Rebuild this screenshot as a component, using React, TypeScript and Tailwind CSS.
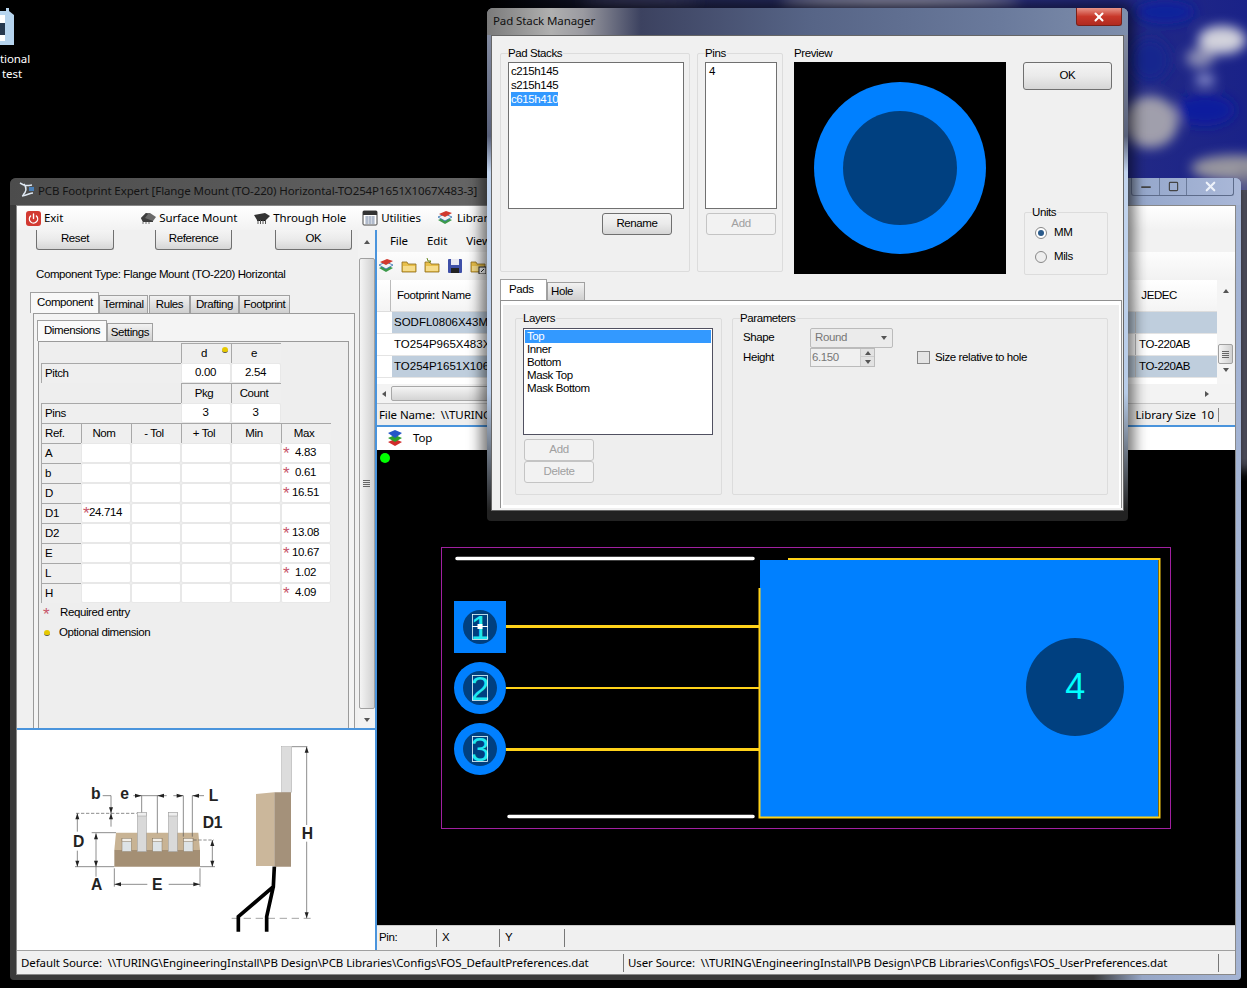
import { Minus, Power, Square, X } from "lucide-react";
import type { ReactNode } from "react";

const sans = "font-['Liberation_Sans',Arial,sans-serif] text-[11.5px] tracking-[-0.4px]";
const segoe = "font-['Noto_Sans',sans-serif] text-[11.5px] tracking-[-0.1px]";

const dimensions = [
  ["A", "", "4.83"],
  ["b", "", "0.61"],
  ["D", "", "16.51"],
  ["D1", "24.714", ""],
  ["D2", "", "13.08"],
  ["E", "", "10.67"],
  ["L", "", "1.02"],
  ["H", "", "4.09"],
];

const Arrow = ({ dir }: { dir: "up" | "down" | "left" | "right" }) => {
  const points = {
    up: "1,6 4,2 7,6",
    down: "1,2 4,6 7,2",
    left: "6,1 2,4 6,7",
    right: "2,1 6,4 2,7",
  }[dir];
  return (
    <svg width="8" height="8" viewBox="0 0 8 8">
      <polygon points={points} fill="#555" />
    </svg>
  );
};

const Grip = () => (
  <div className="flex flex-col gap-[1px]">
    <div className="w-[7px] h-[1px] bg-[#666]" />
    <div className="w-[7px] h-[1px] bg-[#666]" />
    <div className="w-[7px] h-[1px] bg-[#666]" />
    <div className="w-[7px] h-[1px] bg-[#666]" />
  </div>
);

const Folder = ({ spark, link }: { spark?: boolean; link?: boolean }) => (
  <svg width="16" height="16" viewBox="0 0 16 16">
    <path d="M1 4h5l1 2h8v8H1z" fill="#e8bf4a" stroke="#8a6a1c" strokeWidth="0.8" />
    <path d="M2 8h12v5H2z" fill="#f6dc8a" />
    {spark && <path d="M3 0l1 3 3 0-2 2" fill="none" stroke="#6a8a20" strokeWidth="1" />}
    {link && <rect x="9" y="9" width="7" height="7" fill="#fff" stroke="#222" />}
    {link && <path d="M11 14l3-3" stroke="#222" />}
  </svg>
);

const Books = () => (
  <svg width="16" height="16" viewBox="0 0 16 16">
    <path d="M1 10l7-3 7 3-7 4z" fill="#3c9a4a" />
    <path d="M1 7l7-3 7 3-7 4z" fill="#f2f2f2" stroke="#2f6fb0" strokeWidth="0.8" />
    <path d="M2 4l7-3 6 2-7 4z" fill="#d0392e" />
  </svg>
);

const SmtChip = () => (
  <svg width="16" height="14" viewBox="0 0 16 14">
    <path d="M1 7l5-5 4 0 6 4-3 4-10 1z" fill="#6a6a6a" />
    <path d="M1 7l5-5 2 1-3 4 8 3v1L3 11z" fill="#3e3e3e" />
    <path d="M3 11v2M6 11v2M9 11v2" stroke="#888" strokeWidth="1.2" />
  </svg>
);

const DipChip = () => (
  <svg width="16" height="14" viewBox="0 0 16 14">
    <path d="M0 4l11-2 5 3-4 4-9 0z" fill="#333" />
    <path d="M3 9h9v1H3z" fill="#111" />
    <path d="M4 9v4M6.500 9v4M9 9v4M11.500 9v4" stroke="#555" strokeWidth="1" />
  </svg>
);

const Calendar = () => (
  <svg width="16" height="16" viewBox="0 0 16 16">
    <rect x="1" y="1" width="14" height="14" rx="1" fill="#fff" stroke="#444" />
    <rect x="1" y="1" width="14" height="4" fill="#333" />
    <path d="M3 7h10M3 9h10M3 11h10M3 13h10M5 6v8M8 6v8M11 6v8" stroke="#7a8aa8" strokeWidth="0.7" />
  </svg>
);

const Dot = ({ className }: { className: string }) => (
  <span className={`block w-[6px] h-[6px] rounded-full bg-[#e6c800] border-b border-[#555] ${className}`} />
);

const Label = ({ children, center, span }: { children?: ReactNode; center?: boolean; span?: boolean }) => (
  <div
    className={`flex items-center h-full border-t border-l border-[#a8a8a8] bg-[#efefef] text-black ${
      center ? "justify-center pr-[5px]" : "pl-[3px]"
    } ${span ? "col-span-3" : ""}`}
  >
    {children}
  </div>
);

const Value = ({ children, required }: { children?: ReactNode; required?: boolean }) => (
  <div className="relative flex items-center justify-center h-full bg-white border border-[#e8e8e8] rounded-[2px] pr-[1px] text-black">
    {required && <span className="absolute left-[1px] top-[1px] text-[17px] leading-[17px] text-[#c8566c]">*</span>}
    {children}
  </div>
);

const DimensionGrid = () => (
  <div className="grid grid-cols-[40px_50px_50px_50px_50px_50px] auto-rows-[20px]">
    <div className="col-span-3" />
    <div className="relative h-full">
      <Label center>d</Label>
      <Dot className="absolute right-[3px] top-[4px]" />
    </div>
    <Label center>e</Label>
    <div />
    <Label span>Pitch</Label>
    <Value>0.00</Value>
    <Value>2.54</Value>
    <div />
    <div className="col-span-3" />
    <Label center>Pkg</Label>
    <Label center>Count</Label>
    <div />
    <Label span>Pins</Label>
    <Value>3</Value>
    <Value>3</Value>
    <div />
    <Label>Ref.</Label>
    <Label center>Nom</Label>
    <Label center>- Tol</Label>
    <Label center>+ Tol</Label>
    <Label center>Min</Label>
    <Label center>Max</Label>
    {dimensions.map(([name, nom, max]) => (
      <div key={name} className="contents">
        <Label>{name}</Label>
        <Value required={nom !== ""}>{nom}</Value>
        <Value />
        <Value />
        <Value />
        <Value required={max !== ""}>{max}</Value>
      </div>
    ))}
  </div>
);

const GroupBox = ({ title, className, children }: { title: string; className: string; children?: ReactNode }) => (
  <div className={`relative border border-[#dcdcdc] rounded-[2px] ${className}`}>
    <span className="absolute top-[-7px] left-[7px] bg-[#f0f0f0] pr-[1px] leading-[13px] text-black">
      {title}
    </span>
    {children}
  </div>
);

const WinButton = ({ children, className, disabled }: { children: ReactNode; className: string; disabled?: boolean }) => (
  <div
    className={`flex items-center justify-center rounded-[3px] border ${
      disabled
        ? "border-[#c4c4c4] bg-[#f2f2f2] text-[#a0a0a0]"
        : "border-[#707070] bg-[linear-gradient(#f4f4f4,#ebebeb_48%,#d6d6d6)] text-black"
    } ${className}`}
  >
    {children}
  </div>
);

const Wallpaper = () => (
  <svg className="absolute right-0 top-0" width="760" height="520" viewBox="487 0 760 520">
    <defs>
      <filter id="cloud" x="-40%" y="-40%" width="180%" height="180%">
        <feGaussianBlur stdDeviation="6" />
      </filter>
      <linearGradient id="fade" x1="0" x2="1" y1="0" y2="0">
        <stop offset="0" stopColor="#000" />
        <stop offset="0.25" stopColor="#232850" />
        <stop offset="0.7" stopColor="#2a3084" />
        <stop offset="1" stopColor="#1a2288" />
      </linearGradient>
    </defs>
    <rect x="487" y="0" width="760" height="190" fill="url(#fade)" />
    <g filter="url(#cloud)">
      <ellipse cx="1222" cy="40" rx="24" ry="14" fill="#d2d2dc" />
      <ellipse cx="1200" cy="58" rx="14" ry="10" fill="#8a8cb4" />
      <ellipse cx="1165" cy="12" rx="30" ry="12" fill="#10209c" />
      <ellipse cx="1150" cy="122" rx="28" ry="26" fill="#a09fac" />
      <ellipse cx="1205" cy="110" rx="30" ry="16" fill="#0e1c9e" />
      <ellipse cx="1235" cy="168" rx="44" ry="13" fill="#98969f" />
      <ellipse cx="1150" cy="60" rx="20" ry="22" fill="#18258e" />
      <ellipse cx="1205" cy="80" rx="10" ry="5" fill="#a0a4d8" />
      <ellipse cx="900" cy="2" rx="120" ry="6" fill="#a8a8b8" />
      <ellipse cx="640" cy="2" rx="60" ry="4" fill="#46466e" />
      <rect x="1240" y="170" width="10" height="300" fill="#74748a" />
    </g>
  </svg>
);

const FrontAndSideDrawing = () => (
  <svg width="350" height="220" viewBox="0 0 1050 660" className="ml-[3px]" fontFamily="Liberation Sans, Arial, sans-serif">
    <path d="M288 308H535L540 360H283Z" fill="#c8b394" />
    <path d="M283 360H540V410H283Z" fill="#a48f74" />
    {[306, 398, 491].map((x) => (
      <g key={x}>
        <rect x={x} y="325" width="28" height="40" fill="#dde3e6" stroke="#8a7a62" strokeWidth="1.5" />
        <rect x={x} y="325" width="28" height="9" fill="#f3efe8" stroke="#8a7a62" strokeWidth="1.5" />
      </g>
    ))}
    {[352, 445].map((x) => (
      <g key={x}>
        <rect x={x} y="247" width="27" height="118" fill="#d9d9d9" stroke="#9a9a9a" strokeWidth="1.5" />
        <rect x={x} y="247" width="27" height="11" fill="#efefef" stroke="#9a9a9a" strokeWidth="1.5" />
      </g>
    ))}
    <g stroke="#555" strokeWidth="2" fill="none">
      <path d="M248 197H273V290M172 250V305M172 362V410M228 310V440M215 308H288M165 410H283M365 197V247M412 197V310M490 197V320M517 197V320M340 197H440" />
      <path d="M460 197H490M517 197H552M577 330V410M540 410H585M283 415V470M540 415V470M283 463H382M446 463H540" />
      <path d="M520 330H582M168 250H350" strokeDasharray="10 5" />
      <path d="M815 50H862M860 50V285M860 335V565" />
      <path d="M635 565H872" strokeDasharray="22 14" stroke="#777" />
    </g>
    <g fill="#222">
      <path d="M172 250l-6 18h12zM172 410l-6-18h12zM228 310l-6 18h12zM228 410l-6-18h12zM860 50l-6 18h12zM860 565l-6-18h12zM577 330l-6 18h12zM577 410l-6-18h12z" />
      <path d="M283 463l20-6v12zM540 463l-20-6v12zM365 197l-20-6v12zM412 197l20-6v12zM490 197l-20-6v12zM517 197l20-6v12zM273 250l-6-18h12zM273 250l-6 18h12z" />
    </g>
    <g fontSize="47" fontWeight="700" fill="#222">
      <text x="213" y="208">b</text>
      <text x="301" y="208">e</text>
      <text x="566" y="213">L</text>
      <text x="548" y="295">D1</text>
      <text x="159" y="350">D</text>
      <text x="213" y="481">A</text>
      <text x="396" y="481">E</text>
      <text x="845" y="327">H</text>
    </g>
    <rect x="785" y="50" width="30" height="137" fill="#dcdcdc" stroke="#a8a8a8" strokeWidth="1.5" />
    <path d="M708 192L763 187V408L708 408Z" fill="#cbb79b" />
    <path d="M763 187H813V410H763Z" fill="#a4917a" />
    <path d="M763 410L760 470L655 560V605M760 470L740 560V605" fill="none" stroke="#000" strokeWidth="11" />
  </svg>
);

const PcbCanvas = () => (
  <svg width="858" height="475" viewBox="377 450 858 475" className="block bg-black shrink-0" fontFamily="Liberation Sans, Arial, sans-serif">
    <circle cx="385" cy="458" r="5" fill="#00ff00" />
    <rect x="441.5" y="547.5" width="729" height="281" fill="none" stroke="#a020a0" />
    <path d="M457 558.5H753M509 816.5H753" stroke="#fff" strokeWidth="3.5" strokeLinecap="round" />
    <rect x="760" y="560" width="398" height="257" fill="#0080ff" />
    <path d="M788 559H1159.5V817.5H759.5V588" fill="none" stroke="#ffd21a" strokeWidth="2" />
    <circle cx="1075" cy="687" r="49" fill="#004080" />
    <text x="1075" y="699" fontSize="36" fill="#00ffff" textAnchor="middle">4</text>
    <path d="M506 626.5H759M506 749.5H759" stroke="#ffd21a" strokeWidth="3" />
    <path d="M506 688H759" stroke="#ffd21a" strokeWidth="2" />
    <rect x="454" y="601" width="52" height="52" fill="#0080ff" />
    <circle cx="480" cy="688" r="26" fill="#0080ff" />
    <circle cx="480" cy="749" r="26" fill="#0080ff" />
    {[
      { y: 627, label: "1" },
      { y: 688, label: "2" },
      { y: 749, label: "3" },
    ].map((p) => (
      <g key={p.label}>
        <circle cx="480" cy={p.y} r="17" fill="#004080" />
        <text x="480" y={p.y + 12} fontSize="34" fill="#1ee8f0" textAnchor="middle">
          {p.label}
        </text>
        <rect x="472.5" y={p.y - 12.5} width="15" height="25" fill="none" stroke="#e8ffff" strokeWidth="0.8" />
      </g>
    ))}
    <path d="M472 626.5H488" stroke="#fff" />
    <rect x="477.5" y="624" width="5" height="5" fill="#fff" />
  </svg>
);

const MainWindow = () => (
  <div className="absolute left-[10px] top-[178px] w-[1231px] h-[802px] rounded-t-[6px] rounded-b-[4px] bg-[linear-gradient(90deg,#3a3a3a,#3a3a3a_88%,#96a6c6_92%,#a4b4d4)] flex flex-col">
    <div className="h-[27px] shrink-0 flex items-start relative rounded-t-[6px] bg-[linear-gradient(90deg,#4c4c4c,#666_40%,#5a5a5a_88%,#96a8cc_92%,#aab8d8)]">
      <svg width="18" height="18" viewBox="0 0 18 18" className="ml-[8px] mt-[3px]">
        <path d="M2 2c5 3 6 3 12 2M4 15c6-1 8-3 11-3M6 3c3 4 2 8-1 11" stroke="#dfe8f2" fill="none" strokeWidth="1.5" />
        <rect x="11" y="6" width="5" height="4" fill="#4a80b8" />
      </svg>
      <span className={`${segoe} ml-[2px] mt-[4px] leading-[17px] text-[#141414] whitespace-nowrap`}>
        PCB Footprint Expert [Flange Mount (TO-220) Horizontal-TO254P1651X1067X483-3]
      </span>
      <div className="ml-auto mr-[7px] flex h-[18px] border border-t-0 border-[#5d6b8a] rounded-b-[3px] text-[#333]">
        <div className="w-[28px] flex items-end justify-center border-r border-[#6a7a9a] pb-[1px]">
          <Minus size={14} strokeWidth={3} color="#444" />
        </div>
        <div className="w-[27px] flex items-center justify-center border-r border-[#6a7a9a]">
          <Square size={11} strokeWidth={2.5} color="#444" />
        </div>
        <div className="w-[46px] flex items-center justify-center">
          <X size={15} strokeWidth={3.5} color="#eef2fa" />
        </div>
      </div>
    </div>

    <div className="ml-[6px] mr-[5px] h-[770px] shrink-0 flex flex-col bg-[#f0f0f0] border border-[#888]">
      <div className={`${segoe} h-[24px] shrink-0 flex items-center bg-[linear-gradient(#fff,#f2f2f2)] text-black whitespace-nowrap`}>
        <div className="ml-[9px] w-[15px] h-[15px] rounded-[3px] bg-[#d23a32] flex items-center justify-center">
          <Power size={11} strokeWidth={3} color="#fff" />
        </div>
        <span className="ml-[3px]">Exit</span>
        <div className="ml-[77px]"><SmtChip /></div>
        <span className="ml-[3px]">Surface Mount</span>
        <div className="ml-[17px]"><DipChip /></div>
        <span className="ml-[3px]">Through Hole</span>
        <div className="ml-[16px]"><Calendar /></div>
        <span className="ml-[3px]">Utilities</span>
        <div className="ml-[16px]"><Books /></div>
        <span className="ml-[4px]">Library</span>
      </div>

      <div className="flex h-[720px] shrink-0">
        <div className={`${sans} w-[360px] shrink-0 flex flex-col border-r-2 border-[#4a94dc]`}>
          <div className="flex h-[498px] shrink-0 border-b-2 border-[#4a94dc] box-content">
            <div className="w-[341px] shrink-0 flex flex-col">
              <div className="flex ml-[19px] h-[20px] shrink-0">
                <WinButton className="w-[78px] rounded-t-none border-t-0 pb-[2px]">Reset</WinButton>
                <WinButton className="ml-[41px] w-[77px] rounded-t-none border-t-0 pb-[2px]">Reference</WinButton>
                <WinButton className="ml-[43px] w-[77px] rounded-t-none border-t-0 pb-[2px]">OK</WinButton>
              </div>
              <div className="ml-[19px] mt-[17px] h-[14px] leading-[14px] text-black whitespace-nowrap">
                Component Type: Flange Mount (TO-220) Horizontal
              </div>
              <div className="ml-[13px] mt-[12px] h-[20px] flex items-end text-black">
                <div className="w-[69px] h-[21px] border border-b-0 border-[#a0a0a0] bg-[#f8f8f8] pl-[6px] leading-[18px]">Component</div>
                <div className="w-[49px] h-[18px] border border-b-0 border-[#a0a0a0] bg-[linear-gradient(#f2f2f2,#cfcfcf)] text-center">Terminal</div>
                <div className="ml-[1px] w-[41px] h-[18px] border border-b-0 border-[#a0a0a0] bg-[linear-gradient(#f2f2f2,#cfcfcf)] text-center">Rules</div>
                <div className="w-[49px] h-[18px] border border-b-0 border-[#a0a0a0] bg-[linear-gradient(#f2f2f2,#cfcfcf)] text-center">Drafting</div>
                <div className="w-[51px] h-[18px] border border-b-0 border-[#a0a0a0] bg-[linear-gradient(#f2f2f2,#cfcfcf)] text-center">Footprint</div>
              </div>
              <div className="ml-[16px] w-[322px] flex-1 min-h-0 border border-b-0 border-[#9a9a9a] bg-[#f4f4f4] pl-[3px] pt-[6px]">
                <div className="h-[21px] flex items-end text-black">
                  <div className="w-[70px] h-[21px] border border-b-0 border-[#a0a0a0] bg-[#fafafa] text-center leading-[18px]">Dimensions</div>
                  <div className="w-[46px] h-[18px] border border-b-0 border-[#a0a0a0] bg-[linear-gradient(#f2f2f2,#cfcfcf)] text-center">Settings</div>
                </div>
                <div className="ml-[1px] w-[311px] h-[387px] border border-b-0 border-[#9a9a9a] bg-[#eeeeee] pl-[2px] pt-[1px]">
                  <DimensionGrid />
                  <div className="flex flex-col text-black">
                    <div className="h-[20px] flex items-center">
                      <span className="ml-[2px] w-[17px] h-[14px] text-[#c8566c] text-[17px] leading-[17px]">*</span>
                      <span>Required entry</span>
                    </div>
                    <div className="h-[20px] flex items-center">
                      <Dot className="ml-[3px] mr-[9px]" />
                      <span>Optional dimension</span>
                    </div>
                  </div>
                </div>
              </div>
            </div>
            <div className="w-[17px] shrink-0 flex flex-col items-center bg-[#f2f2f2]">
              <div className="h-[21px] flex items-center pt-[2px]"><Arrow dir="up" /></div>
              <div className="mt-[7px] w-[16px] h-[451px] rounded-[2px] border border-[#a0a0a0] bg-[linear-gradient(90deg,#f4f4f4,#d0d0d0)] flex items-center justify-center">
                <Grip />
              </div>
              <div className="mt-[7px]"><Arrow dir="down" /></div>
            </div>
          </div>
          <div className="bg-white flex-1 min-h-0 overflow-hidden">
            <FrontAndSideDrawing />
          </div>
        </div>

        <div className={`${sans} flex-1 min-w-0 flex flex-col text-black`}>
          <div className={`${segoe} h-[22px] shrink-0 flex items-center pl-[13px] gap-[19px] bg-[#f2f2f2]`}>
            <span>File</span>
            <span>Edit</span>
            <span>View</span>
          </div>
          <div className="h-[28px] shrink-0 flex items-center gap-[7px] pl-[1px] bg-[linear-gradient(#fdfdfd,#f2f2f2)]">
            <Books />
            <Folder />
            <Folder spark />
            <svg width="16" height="16" viewBox="0 0 16 16">
              <rect x="1" y="1" width="14" height="14" rx="1" fill="#3e4fa8" />
              <rect x="4" y="1" width="8" height="6" fill="#e8e8f2" />
              <rect x="4" y="10" width="8" height="5" fill="#222" />
            </svg>
            <Folder link />
          </div>
          <div className="h-[104px] shrink-0 flex bg-[#f0f0f0]">
            <div className="flex-1 min-w-0 flex flex-col bg-white">
              <div className="h-[32px] shrink-0 flex items-center bg-[linear-gradient(#fff,#f4f4f4)] border-b border-[#ddd]">
                <div className="w-[14px] h-full border-r border-[#bbb]" />
                <span className="ml-[6px]">Footprint Name</span>
                <span className="ml-auto mr-[40px]">JEDEC</span>
              </div>
              {[
                ["SODFL0806X43M_", "", "bg-[#bfcedd]"],
                ["TO254P965X483X", "TO-220AB", "bg-white"],
                ["TO254P1651X106", "TO-220AB", "bg-[#bfcedd]"],
              ].map(([name, jedec, bg]) => (
                <div key={name} className="h-[22px] shrink-0 flex items-center border-b border-[#e4e4e4]">
                  <div className="w-[15px] h-full bg-white" />
                  <div className={`flex-1 h-full flex items-center pl-[2px] ${bg}`}>
                    <span className="tracking-normal">{name}</span>
                    <span className="ml-auto w-[82px] h-full flex items-center pl-[3px] border-l border-[#bbb]">{jedec}</span>
                  </div>
                </div>
              ))}
            </div>
            <div className="w-[17px] mr-[1px] shrink-0 flex flex-col items-center bg-[#f4f4f4]">
              <div className="h-[17px] mt-[2px] flex items-center"><Arrow dir="up" /></div>
              <div className="mt-[45px] w-[15px] h-[20px] rounded-[2px] border border-[#a0a0a0] bg-[linear-gradient(90deg,#f4f4f4,#d0d0d0)] flex items-center justify-center">
                <Grip />
              </div>
              <div className="mt-[2px]"><Arrow dir="down" /></div>
            </div>
          </div>
          <div className="h-[19px] shrink-0 flex items-center bg-[#f3f3f3]">
            <div className="ml-[3px]"><Arrow dir="left" /></div>
            <div className="ml-[3px] w-[640px] h-[15px] rounded-[2px] border border-[#a8a8a8] bg-[linear-gradient(#f4f4f4,#d4d4d4)]" />
            <div className="ml-auto mr-[24px]"><Arrow dir="right" /></div>
          </div>
          <div className={`${segoe} h-[22px] shrink-0 flex items-center pl-[2px] bg-[#eeeeee] border-t border-[#c8c8c8] whitespace-nowrap`}>
            <span>File Name:&nbsp;&nbsp;\\TURING</span>
            <span className="ml-auto">Library Size</span>
            <span className="ml-[5px] w-[16px] mr-[1px]">10</span>
            <span className="w-[1px] h-[14px] bg-[#888] mr-[16px]" />
          </div>
          <div className="h-[2px] shrink-0 bg-[#4a94dc]" />
          <div className="h-[23px] shrink-0 flex items-center bg-white pb-[2px]">
            <svg width="18" height="18" viewBox="0 0 18 18" className="ml-[9px]">
              <path d="M9 10l7 3-7 4-7-4z" fill="#d02c2c" />
              <path d="M9 6l7 3-7 4-7-4z" fill="#2ca02c" />
              <path d="M9 1l7 3-7 5-7-5z" fill="#2456c8" />
            </svg>
            <span className={`${segoe} ml-[9px]`}>Top</span>
          </div>
          <PcbCanvas />
          <div className="flex-1 min-h-0 flex items-center bg-[#f0f0f0] border-t border-[#ccc]">
            <span className="w-[60px] pl-[2px] h-[18px] border-r border-[#777]">Pin:</span>
            <span className="w-[63px] pl-[5px] h-[18px] border-r border-[#777]">X</span>
            <span className="w-[65px] pl-[5px] h-[18px] border-r border-[#777]">Y</span>
          </div>
        </div>
      </div>

      <div className={`${segoe} flex-1 min-h-0 flex items-center bg-[#f0f0f0] border-t border-[#a0a0a0] text-black whitespace-nowrap`}>
        <span className="w-[607px] pl-[4px] h-[18px] leading-[18px] border-r border-[#777] overflow-hidden">
          Default Source:&nbsp;&nbsp;\\TURING\EngineeringInstall\PB Design\PCB Libraries\Configs\FOS_DefaultPreferences.dat
        </span>
        <span className="w-[595px] pl-[4px] h-[18px] leading-[18px] border-r border-[#777] overflow-hidden">
          User Source:&nbsp;&nbsp;\\TURING\EngineeringInstall\PB Design\PCB Libraries\Configs\FOS_UserPreferences.dat
        </span>
      </div>
    </div>
  </div>
);

const PadStackDialog = () => (
  <div className="absolute left-[487px] top-[8px] w-[641px] h-[513px] rounded-t-[6px] rounded-b-[4px] flex flex-col bg-[linear-gradient(#8f97ab,#59617a_25%,#c3d5ee_32%,#b8cce8_75%,#222_98%)] shadow-[0_0_14px_6px_rgba(0,0,0,0.55)]">
    <div className="relative h-[27px] shrink-0 flex items-start rounded-t-[6px] bg-[linear-gradient(90deg,#7a7a7a,#b0b0b0_10%,#9a9aa0_15%,#3c4260_24%,#566486_50%,#6a7a9c_80%,#7e8eac)]">
      <span className={`${segoe} ml-[6px] mt-[4px] leading-[17px] text-[#111]`}>Pad Stack Manager</span>
      <div className="ml-auto mr-[6px] w-[46px] h-[18px] rounded-b-[3px] border border-t-0 border-[#7a2018] bg-[linear-gradient(#e8968a,#c8382a_50%,#b02a20)] flex items-center justify-center">
        <X size={14} strokeWidth={3.5} color="#fff" />
      </div>
    </div>
    <div className={`${sans} mx-[4px] h-[476px] shrink-0 bg-[#f0f0f0] border border-[#666] text-black`}>
      <div className="flex h-[243px] pt-[17px]">
        <GroupBox title="Pad Stacks" className="ml-[8px] w-[190px] h-[219px]">
          <div className="ml-[7px] mt-[8px] w-[176px] h-[147px] bg-white border border-[#707070] pl-[2px] pt-[1px] leading-[14px]">
            <div>c215h145</div>
            <div>s215h145</div>
            <div className="w-fit bg-[#3399ff] text-white">c615h410</div>
          </div>
          <WinButton className="ml-[101px] mt-[4px] w-[70px] h-[22px]">Rename</WinButton>
        </GroupBox>
        <GroupBox title="Pins" className="ml-[7px] w-[86px] h-[219px]">
          <div className="ml-[7px] mt-[8px] w-[72px] h-[147px] bg-white border border-[#707070] pl-[3px] pt-[1px] leading-[14px]">4</div>
          <WinButton disabled className="ml-[8px] mt-[4px] w-[70px] h-[22px]">Add</WinButton>
        </GroupBox>
        <div className="ml-[11px] w-[212px]">
          <div className="h-[9px] leading-[9px] mt-[-4px] mb-[4px]">Preview</div>
          <svg width="212" height="212" viewBox="0 0 212 212" className="block bg-black">
            <circle cx="106" cy="106" r="86" fill="#0080ff" />
            <circle cx="106" cy="106" r="57" fill="#004080" />
          </svg>
        </div>
        <div className="ml-[17px] w-[89px] flex flex-col">
          <WinButton className="mt-[9px] h-[28px]">OK</WinButton>
          <GroupBox title="Units" className="mt-[122px] ml-[1px] w-[84px] h-[63px]">
            <div className="ml-[10px] mt-[11px] flex items-center gap-[7px]">
              <span className="w-[12px] h-[12px] rounded-full border border-[#888] bg-white flex items-center justify-center">
                <span className="w-[6px] h-[6px] rounded-full bg-[#2a5a8a]" />
              </span>
              <span>MM</span>
            </div>
            <div className="ml-[10px] mt-[7px] flex items-center gap-[7px]">
              <span className="w-[12px] h-[12px] rounded-full border border-[#888] bg-[#eee]" />
              <span>Mils</span>
            </div>
          </GroupBox>
        </div>
      </div>
      <div className="ml-[8px] h-[21px] flex items-end">
        <div className="w-[47px] h-[21px] border border-b-0 border-[#a0a0a0] bg-white pl-[8px] leading-[18px]">Pads</div>
        <div className="w-[38px] h-[18px] border border-b-0 border-[#a0a0a0] bg-[linear-gradient(#f2f2f2,#cfcfcf)] pl-[3px]">Hole</div>
      </div>
      <div className="ml-[8px] w-[622px] h-[208px] border-t border-x border-[#909090] bg-white p-[2px] pt-[4px] pb-[3px]">
        <div className="h-full flex bg-[#eeeeee] pt-[13px]">
          <GroupBox title="Layers" className="ml-[12px] w-[207px] h-[177px]">
            <div className="ml-[7px] mt-[9px] w-[190px] h-[107px] bg-white border border-[#505060] p-[1px] leading-[13px]">
              <div className="bg-[#3399ff] text-white pl-[2px]">Top</div>
              <div className="pl-[2px]">Inner</div>
              <div className="pl-[2px]">Bottom</div>
              <div className="pl-[2px]">Mask Top</div>
              <div className="pl-[2px]">Mask Bottom</div>
            </div>
            <WinButton disabled className="ml-[8px] mt-[4px] w-[70px] h-[22px]">Add</WinButton>
            <WinButton disabled className="ml-[8px] w-[70px] h-[22px]">Delete</WinButton>
          </GroupBox>
          <GroupBox title="Parameters" className="ml-[10px] w-[376px] h-[177px]">
            <div className="grid grid-cols-[67px_83px_auto] grid-rows-[19px_21px] ml-[10px] mt-[9px] items-center">
              <span>Shape</span>
              <div className="w-[83px] h-[20px] flex items-center justify-between px-[4px] rounded-[2px] border border-[#bbb] bg-[#ebebeb] text-[#777]">
                Round
                <Arrow dir="down" />
              </div>
              <span />
              <span>Height</span>
              <div className="w-[65px] h-[19px] flex items-center justify-between pl-[1px] border border-[#bbb] bg-[#f0f0f0] text-[#777]">
                6.150
                <div className="flex flex-col w-[14px] border-l border-[#ccc]">
                  <div className="h-[8px] flex items-center justify-center bg-[#e2e2e2] border-b border-[#ccc]"><Arrow dir="up" /></div>
                  <div className="h-[9px] flex items-center justify-center bg-[#e2e2e2]"><Arrow dir="down" /></div>
                </div>
              </div>
              <div className="ml-[24px] flex items-center">
                <span className="w-[13px] h-[13px] border border-[#888] bg-[#e4e4e4]" />
                <span className="ml-[5px]">Size relative to hole</span>
              </div>
            </div>
          </GroupBox>
        </div>
      </div>
    </div>
  </div>
);

const DesktopIcon = () => (
  <div className={`${segoe} absolute left-0 top-0 w-[30px] text-white leading-[15px] text-center`}>
    <svg width="16" height="40" viewBox="0 0 16 40" className="block mt-[5px]">
      <path d="M0 6h6V3h3v3L14 10V42L0 46z" fill="#b6d4ee" />
      <path d="M0 10h5v26H0z" fill="#ffffff" />
      <rect x="0" y="18" width="5" height="12" fill="#26384e" />
    </svg>
    <div className="mt-[6px]">tional</div>
    <div className="ml-[-6px]">test</div>
  </div>
);

export default function App() {
  return (
    <div className="relative w-[1247px] h-[988px] overflow-hidden bg-black">
      <Wallpaper />
      <DesktopIcon />
      <MainWindow />
      <PadStackDialog />
    </div>
  );
}
